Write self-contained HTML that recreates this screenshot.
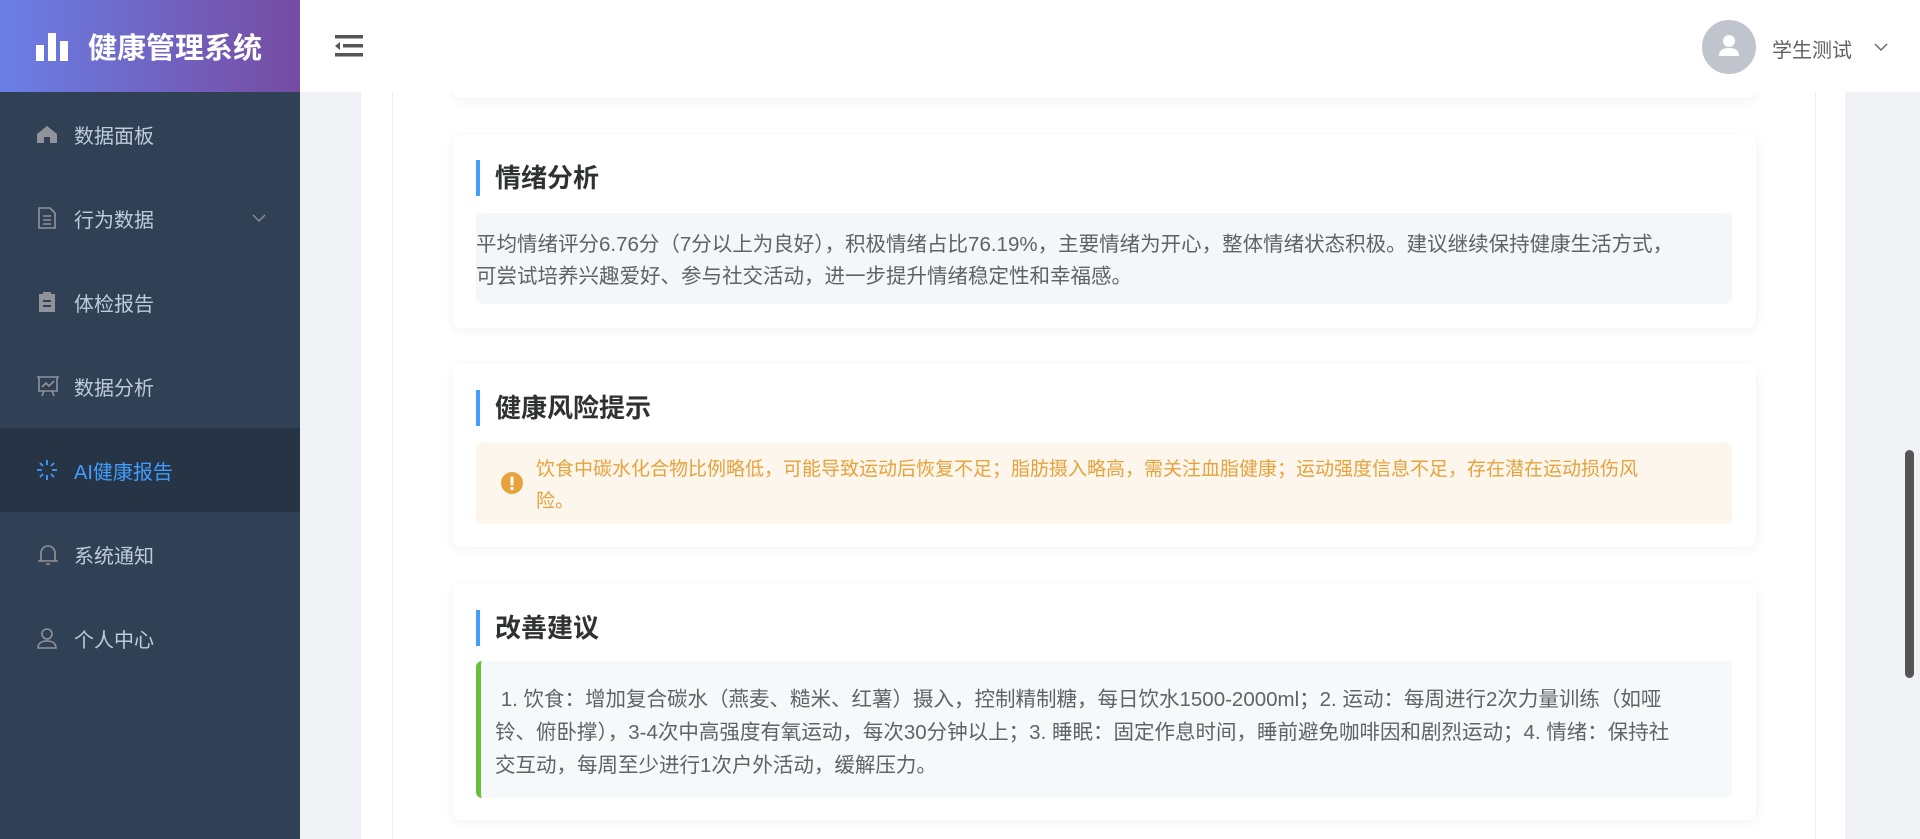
<!DOCTYPE html>
<html><head><meta charset="utf-8"><style>
*{margin:0;padding:0;box-sizing:border-box}
body{width:1920px;height:839px;overflow:hidden;font-family:"Liberation Sans","Noto Sans CJK SC",sans-serif;background:#f0f2f5;position:relative}
.side{position:absolute;left:0;top:0;width:300px;height:839px;background:#304156;z-index:5}
.logo{height:92px;background:linear-gradient(90deg,#6a7fe6,#764ba2);display:flex;align-items:center;color:#fff;font-weight:bold;font-size:29px}
.menu{position:absolute;left:0;width:300px;height:84px;display:flex;align-items:center;color:#bfcbd9;font-size:20px}
.menu svg{position:absolute;left:36px}
.menu span{position:absolute;left:74px}
.act{background:#263445;color:#409eff}
.header{position:absolute;left:300px;top:0;right:0;height:92px;background:#fff;z-index:5}
.panel{position:absolute;left:361px;top:92px;width:1484px;height:747px;background:#fff}
.inner{position:absolute;left:392px;top:92px;width:1424px;height:747px;border-left:1px solid #ebeef5;border-right:1px solid #ebeef5}
.card{position:absolute;left:453px;width:1303px;background:#fff;border-radius:8px;box-shadow:0 2px 12px rgba(0,0,0,.06)}
.title{position:absolute;left:23px;height:36px;border-left:4px solid #409eff;padding-left:15px;font-size:26px;font-weight:bold;color:#303133;line-height:36px}
.box{position:absolute;left:23px;width:1256px;border-radius:6px;font-size:19px;line-height:32px}
</style></head><body>
<div class="side">
 <div class="logo">
  <svg width="34" height="30" style="margin-left:36px;margin-right:18px" viewBox="0 0 34 30"><rect x="0" y="14" width="8" height="16" fill="#fff"/><rect x="12" y="2" width="8" height="28" fill="#fff"/><rect x="24" y="10" width="8" height="20" fill="#fff"/></svg>健康管理系统</div>
 <div class="menu" style="top:92px"><svg width="22" height="22" viewBox="0 0 22 22"><path d="M1 11L11 3l10 8v9h-7v-6h-6v6H1z" fill="#909399"/></svg><span>数据面板</span></div>
 <div class="menu" style="top:176px"><svg width="22" height="22" viewBox="0 0 22 22" fill="none" stroke="#909399" stroke-width="1.6"><path d="M3 1h11l5 5v15H3z"/><path d="M7 9h8M7 13h8M7 17h8"/></svg><span>行为数据</span><svg style="left:252px" width="14" height="10" viewBox="0 0 14 10"><path d="M1 2l6 6 6-6" fill="none" stroke="#909399" stroke-width="1.3"/></svg></div>
 <div class="menu" style="top:260px"><svg width="22" height="22" viewBox="0 0 22 22"><rect x="3" y="3" width="16" height="18" fill="#909399"/><rect x="7" y="1" width="8" height="4" fill="#909399"/><path d="M7 10h8M7 15h8" stroke="#304156" stroke-width="2"/></svg><span>体检报告</span></div>
 <div class="menu" style="top:344px"><svg width="24" height="22" viewBox="0 0 24 22" fill="none" stroke="#909399" stroke-width="1.6"><path d="M1 2h22M3 2v14h18V2M6 12l4-4 3 3 5-5M8 16l-2 5M16 16l2 5"/></svg><span>数据分析</span></div>
 <div class="menu act" style="top:428px"><svg width="22" height="22" viewBox="0 0 22 22" stroke="#409eff" stroke-width="1.8"><path d="M11 1v5M11 16v5M1 11h5M16 11h5M4 4l3 3M15 15l3 3M4 18l3-3M15 7l3-3"/></svg><span>AI健康报告</span></div>
 <div class="menu" style="top:512px"><svg width="24" height="24" viewBox="0 0 24 24" fill="none" stroke="#909399" stroke-width="1.6"><path d="M5 19V11a7 7 0 0114 0v8M2 19h20M10 22h4"/></svg><span>系统通知</span></div>
 <div class="menu" style="top:596px"><svg width="22" height="22" viewBox="0 0 22 22" fill="none" stroke="#909399" stroke-width="1.6"><circle cx="11" cy="7" r="5"/><path d="M2 21c0-5 4-7 9-7s9 2 9 7z"/></svg><span>个人中心</span></div>
</div>
<div class="header">
 <svg style="position:absolute;left:35px;top:35px" width="28" height="22" viewBox="0 0 28 22"><rect x="0" y="0" width="28" height="3.5" fill="#555"/><rect x="8" y="9" width="20" height="3.5" fill="#555"/><rect x="0" y="18" width="28" height="3.5" fill="#555"/><path d="M0 11l5-4v8z" fill="#555"/></svg>
 <div style="position:absolute;left:1402px;top:20px;width:54px;height:54px;border-radius:50%;background:#c0c4cc"><svg width="54" height="54" viewBox="0 0 54 54"><circle cx="27" cy="21" r="6" fill="#fff"/><path d="M17 36c0-6 4-8 10-8s10 2 10 8z" fill="#fff"/></svg></div>
 <div style="position:absolute;left:1472px;top:34px;font-size:20px;color:#606266">学生测试</div>
 <svg style="position:absolute;left:1574px;top:43px" width="14" height="9" viewBox="0 0 14 9"><path d="M1 1l6 6 6-6" fill="none" stroke="#606266" stroke-width="1.4"/></svg>
</div>
<div class="panel"></div>
<div class="inner"></div>
<div class="card" style="top:60px;height:38px"></div>
<div class="card" style="top:135px;height:193px">
 <div class="title" style="top:25px">情绪分析</div>
 <div class="box" style="top:78px;height:91px;background:#f4f6f9;color:#606266;padding:16px 40px 0 0;font-size:20.5px">平均情绪评分6.76分（7分以上为良好），积极情绪占比76.19%，主要情绪为开心，整体情绪状态积极。建议继续保持健康生活方式，可尝试培养兴趣爱好、参与社交活动，进一步提升情绪稳定性和幸福感。</div>
</div>
<div class="card" style="top:364px;height:183px">
 <div class="title" style="top:26px">健康风险提示</div>
 <div class="box" style="top:78px;height:82px;background:#fdf6ec;color:#e6a23c;padding:12px 60px 0 60px">
  <svg style="position:absolute;left:25px;top:30px" width="22" height="22" viewBox="0 0 22 22"><circle cx="11" cy="11" r="11" fill="#e6a23c"/><rect x="9.5" y="4.5" width="3" height="9" rx="1.2" fill="#fff"/><circle cx="11" cy="16.5" r="1.6" fill="#fff"/></svg>饮食中碳水化合物比例略低，可能导致运动后恢复不足；脂肪摄入略高，需关注血脂健康；运动强度信息不足，存在潜在运动损伤风险。</div>
</div>
<div class="card" style="top:584px;height:236px">
 <div class="title" style="top:26px">改善建议</div>
 <div class="box" style="top:77px;height:137px;background:#f7f8fa;color:#606266;border-left:5px solid #67c23a;padding:22px 48px 0 14px;line-height:33px;font-size:20.5px">&nbsp;1. 饮食：增加复合碳水（燕麦、糙米、红薯）摄入，控制精制糖，每日饮水1500-2000ml；2. 运动：每周进行2次力量训练（如哑铃、俯卧撑），3-4次中高强度有氧运动，每次30分钟以上；3. 睡眠：固定作息时间，睡前避免咖啡因和剧烈运动；4. 情绪：保持社交互动，每周至少进行1次户外活动，缓解压力。</div>
</div>
<div style="position:absolute;left:1905px;top:450px;width:9px;height:228px;border-radius:5px;background:#555"></div>
</body></html>
